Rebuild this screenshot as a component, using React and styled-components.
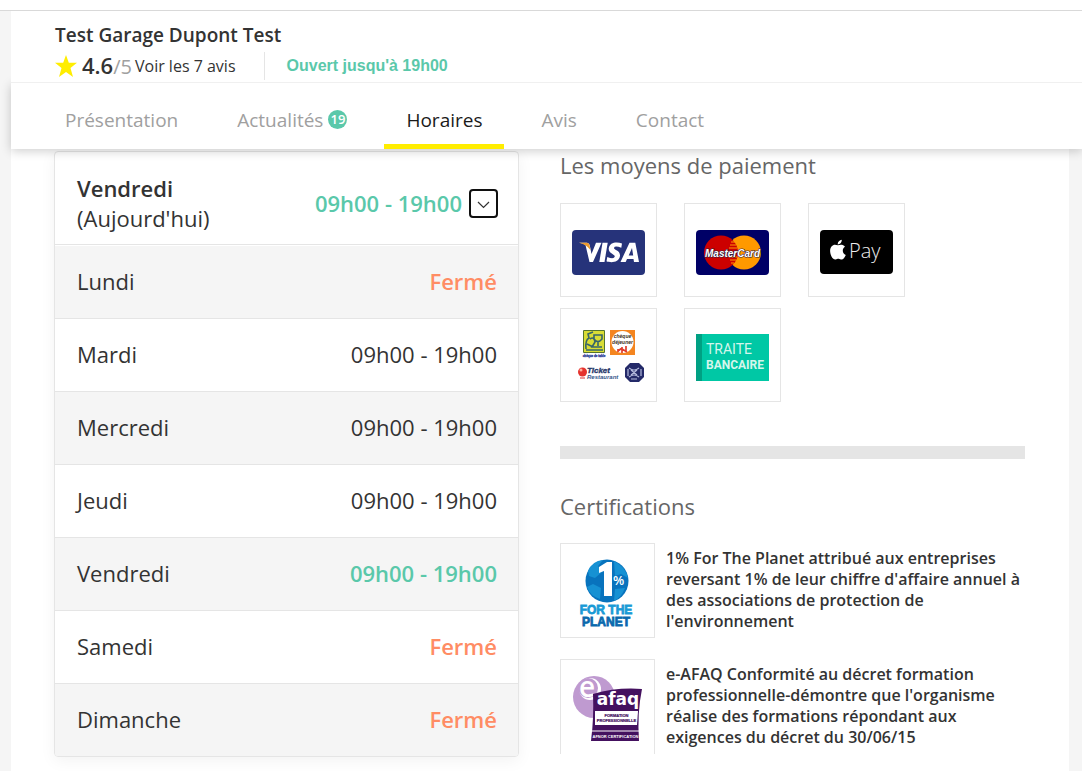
import React, { useState } from "react";
import styled, { createGlobalStyle } from "styled-components";

const GlobalStyle = createGlobalStyle`
    * {
        box-sizing: border-box;
    }
    body {
        margin: 0;
        background: #f5f5f5;
        color: #333;
        font-family: "Open Sans", "Noto Sans", sans-serif;
    }
`

const Page = styled.div`
    display: flex;
    flex-direction: column;
    min-height: 100vh;
`
const TopStrip = styled.div`
    height: 11px;
    background: #fff;
    border-bottom: 1px solid #d9d9d9;
`
const Header = styled.header`
    position: relative;
    z-index: 2;
    height: 72px;
    margin-left: 11px;
    padding: 10px 44px 0;
    background: #fff;
    border-bottom: 1px solid #f0f0f0;
`
const Name = styled.h1`
    margin: 0;
    font-size: 19px;
    line-height: 28px;
    font-weight: 600;
`
const Infos = styled.div`
    display: flex;
    align-items: center;
    height: 33px;
`
const Score = styled.span`
    margin: 0 3px 0 5px;
    font-size: 20px;
    line-height: 28px;
    color: #a0a0a0;

    strong {
        font-size: 22px;
        font-weight: 600;
        color: #333;
    }
`
const ReviewLink = styled.a`
    font-size: 16px;
    color: #333;
    text-decoration: none;
`
const Separator = styled.span`
    width: 1px;
    height: 28px;
    margin: 0 22px 0 28px;
    background: #e5e5e5;
`
const OpenState = styled.span`
    font-family: "Liberation Sans", Arial, sans-serif;
    font-size: 16px;
    font-weight: 700;
    color: #5ac8aa;
`

const Tabs = styled.nav`
    position: relative;
    z-index: 1;
    display: flex;
    gap: 15px;
    height: 66px;
    margin-left: 11px;
    padding-left: 32px;
    background: #fff;
    box-shadow: 0 2px 10px rgba(0, 0, 0, 0.2);
`
const Tab = styled.a`
    display: flex;
    align-items: center;
    padding: 12px 22px 0;
    border-bottom: 5px solid ${({ $active }) => ($active ? "#ffed00" : "transparent")};
    font-size: 19px;
    color: ${({ $active }) => ($active ? "#1a1a1a" : "#a0a0a0")};
    text-decoration: none;
`
const Badge = styled.span`
    width: 19px;
    height: 19px;
    margin-left: 5px;
    border-radius: 50%;
    background: #5ac8aa;
    font-size: 13px;
    font-weight: 600;
    line-height: 19px;
    text-align: center;
    color: #fff;
`

const Content = styled.main`
    flex: 1;
    display: grid;
    grid-template-columns: 1fr 1fr;
    align-items: start;
    gap: 41px;
    margin: 0 13px 0 11px;
    padding: 2px 44px 14px 43px;
    background: #fff;
`
const HoursCard = styled.section`
    overflow: hidden;
    border: 1px solid #e5e5e5;
    border-radius: 4px;
    box-shadow: 0 4px 16px rgba(0, 0, 0, 0.05);
    font-size: 22px;
    line-height: 30px;
`
const Today = styled.div`
    display: flex;
    align-items: center;
    justify-content: space-between;
    height: 93px;
    margin-bottom: 1px;
    padding: 10px 20px 0 22px;
    border-bottom: 1px solid #e5e5e5;

    strong {
        display: block;
        font-weight: 600;
    }
`
const TodayHours = styled.div`
    display: flex;
    align-items: center;
    gap: 7px;
    font-weight: 600;
    color: #5ac8aa;
`
const Toggle = styled.button`
    display: flex;
    align-items: center;
    justify-content: center;
    width: 29px;
    height: 29px;
    padding: 4px 0 0;
    border: 2px solid #101010;
    border-radius: 4px;
    background: #fff;
`
const HoursTable = styled.table`
    width: 100%;
    border-spacing: 0;

    tr:nth-child(odd) {
        background: #f5f5f5;
    }
    th, td {
        height: 73px;
        padding: 0 21px 2px 22px;
        border-bottom: 1px solid #e5e5e5;
    }
    th {
        font-weight: 400;
        text-align: left;
    }
    tr:last-child th, tr:last-child td {
        height: 72px;
        border-bottom: 0;
    }
`
const colors = { closed: "#ff8c64", current: "#5ac8aa" };

const Slot = styled.td`
    text-align: right;
    font-weight: ${({ $state }) => ($state ? 600 : 400)};
    color: ${({ $state }) => colors[$state] || "#333"};
`

const Title = styled.h2`
    margin: 0;
    padding-bottom: 2px;
    font-size: 22px;
    line-height: 28px;
    font-weight: 400;
    color: #666;
`
const Payments = styled.ul`
    display: flex;
    flex-wrap: wrap;
    gap: 11px 27px;
    max-width: 360px;
    margin: 22px 0 44px;
    padding: 0;
    list-style: none;
`
const Payment = styled.li`
    display: flex;
    align-items: center;
    justify-content: center;
    width: 97px;
    height: 94px;
    border: 1px solid #e5e5e5;
    padding-top: 5px;
`
const Divider = styled.hr`
    height: 13px;
    margin: 0 0 33px;
    border: 0;
    background: #e5e5e5;
`
const Certification = styled.article`
    display: flex;
    gap: 11px;
    margin-top: 21px;

    p {
        margin: 5px 0 0;
        font-size: 16px;
        line-height: 21px;
        font-weight: 600;
    }
`
const CertLogo = styled.div`
    flex: none;
    width: 95px;
    height: 95px;
    border: 1px solid #e5e5e5;
    border-bottom-width: ${({ $open }) => ($open ? 0 : "1px")};
`

const Star = () => (
    <svg width="22" height="22" viewBox="0 0 22 22" aria-hidden="true">
        <path d="M11 0l2.800 7.800H22l-6.500 5.200 2.500 9L11 17 4 22l2.500-9L0 7.800h8.200z" fill="#ffed00" />
    </svg>
)

const Visa = () => (
    <svg width="73" height="45" viewBox="0 0 73 45" role="img" aria-label="Visa">
        <rect width="73" height="45" rx="4" fill="#26337a" />
        <g fill="#fff">
            <path d="M17.500 32L13.500 15Q11 13 7 12.700H15Q17 13 17.700 15L19.500 24 24 12.700H29.500L21 32z" />
            <path d="M30.500 12.700H35.700L32.500 32H27.300z" />
            <path d="M50 13.500L49.300 17.700Q42.500 15.300 42 18C42 20 48.500 20.500 48 25.800C47 33 38.500 33 34.500 31.300L35.300 27Q42 29.700 42.800 26.500C42.800 24 36.500 23.700 36.700 18.500C37.500 12 45 11.700 50 13.500z" />
            <path fillRule="evenodd" d="M57.500 12.700H63.300L67 32H62L61.500 29H55L53.700 32H48.500zM60 18L56.700 25.500H61.200z" />
        </g>
        <path d="M7 12.700H15Q17 13 17.500 15L18.500 20Q14 14 7 12.700z" fill="#ee9b2d" />
    </svg>
)

const MasterCard = () => (
    <svg width="73" height="45" viewBox="0 0 73 45" role="img" aria-label="MasterCard">
        <rect width="73" height="45" rx="4" fill="#006" />
        <circle cx="48" cy="22.500" r="17" fill="#f90" />
        <circle cx="25" cy="22.500" r="17" fill="#c00" />
        <path d="M35 12H39M34 15H40M33 18H41M33 27H41M34 30H40M35 33H38" stroke="#f90" strokeWidth="1.200" />
        <text x="36.500" y="27" fontFamily="Liberation Sans" fontSize="10" fontWeight="700" fontStyle="italic" textAnchor="middle" stroke="#302040" strokeWidth="1.200" paintOrder="stroke" fill="#fff">MasterCard</text>
    </svg>
)

const ApplePay = () => (
    <svg width="73" height="45" viewBox="0 0 73 45" role="img" aria-label="Apple Pay">
        <rect width="73" height="44" rx="4" fill="#000" />
        <path d="M18 15.300C20 14.500 23 14 25 16.700C21.600 19 22.300 23.500 25.800 25C24.500 28 23 30 21 29.500C18.500 28.500 18 28.500 15.500 29.500C12 30.500 7.500 20 12 16C14.500 13.800 16 15 18 15.300zM17.700 14.500C17.500 12 19.500 10 21.800 9.700C22 12.500 20 14.500 17.700 14.500z" fill="#fff" />
        <text x="29" y="28" fontFamily="Open Sans" fontSize="20" fontWeight="300" fill="#eee">Pay</text>
    </svg>
)

const MealVouchers = () => (
    <svg width="73" height="56" viewBox="0 0 73 56" role="img" aria-label="Titres restaurant">
        <rect x="11" y="0" width="22" height="23" rx="1" fill="#55752f" />
        <rect x="12" y="1" width="20" height="21" fill="#d9dd35" />
        <path d="M14 19Q13 10 17 8L16 4 21 2M18 9Q22 6 23 12L20 17H30M22 5H30V9Q26 14 22 9zM26 12V16M15 14L21 17M14 20H31" fill="none" stroke="#37666b" strokeWidth="1.600" />
        <text x="22" y="27" fontFamily="Liberation Sans" fontSize="3" fontWeight="700" textAnchor="middle" stroke="#2f4199" strokeWidth="0.300" fill="#2f4199">chèque de table</text>
        <rect x="38" y="0" width="25" height="25" fill="#f48520" />
        <circle cx="50.500" cy="12" r="11" fill="#fff" />
        <text x="50.500" y="8" fontFamily="Liberation Sans" fontSize="5" fontWeight="700" fontStyle="italic" textAnchor="middle" fill="#403020">chèque</text>
        <text x="50.500" y="14" fontFamily="Liberation Sans" fontSize="5" fontWeight="700" fontStyle="italic" textAnchor="middle" fill="#403020">déjeuner</text>
        <path d="M50 17V23M50 18L46 21M50 19L55 22M46 19V22M54 16V22" stroke="#e03d2d" strokeWidth="1.700" />
        <circle cx="10.500" cy="42" r="4.500" fill="#e5322d" />
        <circle cx="9" cy="40" r="1.500" fill="#ffb09f" />
        <path d="M8 48H13" stroke="#d33" />
        <text x="15" y="43" fontFamily="Liberation Sans" fontSize="8" fontWeight="700" fontStyle="italic" stroke="#263669" strokeWidth="0.300" fill="#263669">Ticket</text>
        <text x="15" y="49" fontFamily="Liberation Sans" fontSize="6" fontWeight="700" fontStyle="italic" fill="#36588c">Restaurant</text>
        <path d="M58 33H67L72 38V47L67 52H58L53 47V38z" fill="#242a69" />
        <path d="M57 38Q62 42 67 38M57 47Q62 43 67 47M56 39V46M69 39V46M59 40L65 45M65 40L59 45M59 49H65" fill="none" stroke="#b5bbdd" strokeWidth="1.200" />
    </svg>
)

const BankDraft = () => (
    <svg width="73" height="47" viewBox="0 0 73 47" role="img" aria-label="Traite bancaire">
        <rect width="73" height="47" fill="#00c8a5" />
        <rect width="6" height="47" fill="#00a083" />
        <text x="10" y="20" fontFamily="Roboto" fontSize="14" fill="#d5f6ec">TRAITE</text>
        <text x="10" y="35" fontFamily="Liberation Sans Narrow, Roboto" fontSize="12" fontWeight="700" fill="#d5f6ec">BANCAIRE</text>
    </svg>
)

const OnePercent = () => (
    <svg width="93" height="93" viewBox="0 0 93 93" role="img" aria-label="1% for the planet">
        <circle cx="46" cy="37" r="21.500" fill="#0873bd" />
        <path d="M27 27Q31 17 42 16L37 22 41 28 34 34 28 32zM53 17Q65 23 67 34L60 30 54 32zM32 40L40 44 39 55Q29 52 26 43zM54 45L64 44Q60 54 53 57z" fill="#1691d3" />
        <path d="M38 23L46 18H51V52H43V27L38 29z" fill="#fff" />
        <text x="52" y="41" fontFamily="Open Sans" fontSize="13" fontWeight="600" fill="#fff">%</text>
        <text x="45" y="70" fontFamily="Liberation Sans" fontSize="12" fontWeight="700" textAnchor="middle" stroke="#199ad6" strokeWidth="0.800" fill="#199ad6">FOR THE</text>
        <text x="45" y="82" fontFamily="Liberation Sans" fontSize="12" fontWeight="700" textAnchor="middle" stroke="#0969ad" strokeWidth="0.800" fill="#0969ad">PLANET</text>
    </svg>
)

const Afaq = () => (
    <svg width="93" height="93" viewBox="0 0 93 93" role="img" aria-label="e-AFAQ formation professionnelle">
        <circle cx="33" cy="37" r="21" fill="#bf9ad0" />
        <circle cx="29" cy="29" r="11" fill="#fff" />
        <circle cx="27" cy="28" r="10" fill="#bf9ad0" />
        <text x="18" y="37" fontFamily="Open Sans" fontSize="28" fontWeight="600" fill="#fff">e</text>
        <path d="M32 34Q56 27 81 29Q76 53 78 81H30Q33 58 32 34z" fill="#44115f" />
        <text x="57" y="45" fontFamily="DejaVu Sans" fontSize="17" fontWeight="700" textAnchor="middle" fill="#fff">afaq</text>
        <path d="M34 51H77L76 65H34z" fill="#fff" />
        <text x="55.500" y="57" fontFamily="Liberation Sans" fontSize="4" fontWeight="700" textAnchor="middle" stroke="#44115f" strokeWidth="0.200" fill="#44115f">FORMATION</text>
        <text x="55.500" y="62" fontFamily="Liberation Sans" fontSize="4" fontWeight="700" textAnchor="middle" stroke="#44115f" strokeWidth="0.200" fill="#44115f">PROFESSIONNELLE</text>
        <path d="M31 71H78" stroke="#fff" />
        <text x="54.500" y="78" fontFamily="Liberation Sans" fontSize="4" fontWeight="700" textAnchor="middle" fill="#fff">AFNOR CERTIFICATION</text>
    </svg>
)

const tabs = [
    { label: "Présentation" },
    { label: "Actualités", count: 19 },
    { label: "Horaires", active: true },
    { label: "Avis" },
    { label: "Contact" },
];

const hours = [
    { day: "Lundi", slot: "Fermé", state: "closed" },
    { day: "Mardi", slot: "09h00 - 19h00" },
    { day: "Mercredi", slot: "09h00 - 19h00" },
    { day: "Jeudi", slot: "09h00 - 19h00" },
    { day: "Vendredi", slot: "09h00 - 19h00", state: "current" },
    { day: "Samedi", slot: "Fermé", state: "closed" },
    { day: "Dimanche", slot: "Fermé", state: "closed" },
];

const payments = [Visa, MasterCard, ApplePay, MealVouchers, BankDraft];

export default function App() {
    const [open, setOpen] = useState(true);

    return (
        <Page>
            <GlobalStyle />
            <TopStrip />
            <Header>
                <Name>Test Garage Dupont Test</Name>
                <Infos>
                    <Star />
                    <Score><strong>4.6</strong>/5</Score>
                    <ReviewLink href="#avis">Voir les 7 avis</ReviewLink>
                    <Separator />
                    <OpenState>Ouvert jusqu'à 19h00</OpenState>
                </Infos>
            </Header>
            <Tabs>
                {tabs.map((tab) => (
                    <Tab key={tab.label} href={`#${tab.label.toLowerCase()}`} $active={tab.active}>
                        {tab.label}
                        {tab.count && <Badge>{tab.count}</Badge>}
                    </Tab>
                ))}
            </Tabs>
            <Content>
                <HoursCard>
                    <Today>
                        <div>
                            <strong>Vendredi</strong>
                            (Aujourd'hui)
                        </div>
                        <TodayHours>
                            09h00 - 19h00
                            <Toggle type="button" aria-label="Afficher les horaires" aria-expanded={open} onClick={() => setOpen(!open)}>
                                <svg width="13" height="8" viewBox="0 0 13 8">
                                    <path d="M1 1l5.500 5.500L12 1" fill="none" stroke="#333" strokeWidth="1.200" />
                                </svg>
                            </Toggle>
                        </TodayHours>
                    </Today>
                    {open && (
                        <HoursTable>
                            <tbody>
                                {hours.map(({ day, slot, state }) => (
                                    <tr key={day}>
                                        <th scope="row">{day}</th>
                                        <Slot $state={state}>{slot}</Slot>
                                    </tr>
                                ))}
                            </tbody>
                        </HoursTable>
                    )}
                </HoursCard>
                <section>
                    <Title>Les moyens de paiement</Title>
                    <Payments>
                        {payments.map((Logo, i) => (
                            <Payment key={i}><Logo /></Payment>
                        ))}
                    </Payments>
                    <Divider />
                    <Title>Certifications</Title>
                    <Certification>
                        <CertLogo><OnePercent /></CertLogo>
                        <p>1% For The Planet attribué aux entreprises reversant 1% de leur chiffre d'affaire annuel à des associations de protection de l'environnement</p>
                    </Certification>
                    <Certification>
                        <CertLogo $open><Afaq /></CertLogo>
                        <p>e-AFAQ Conformité au décret formation professionnelle-démontre que l'organisme réalise des formations répondant aux exigences du décret du 30/06/15</p>
                    </Certification>
                </section>
            </Content>
        </Page>
    )
}
